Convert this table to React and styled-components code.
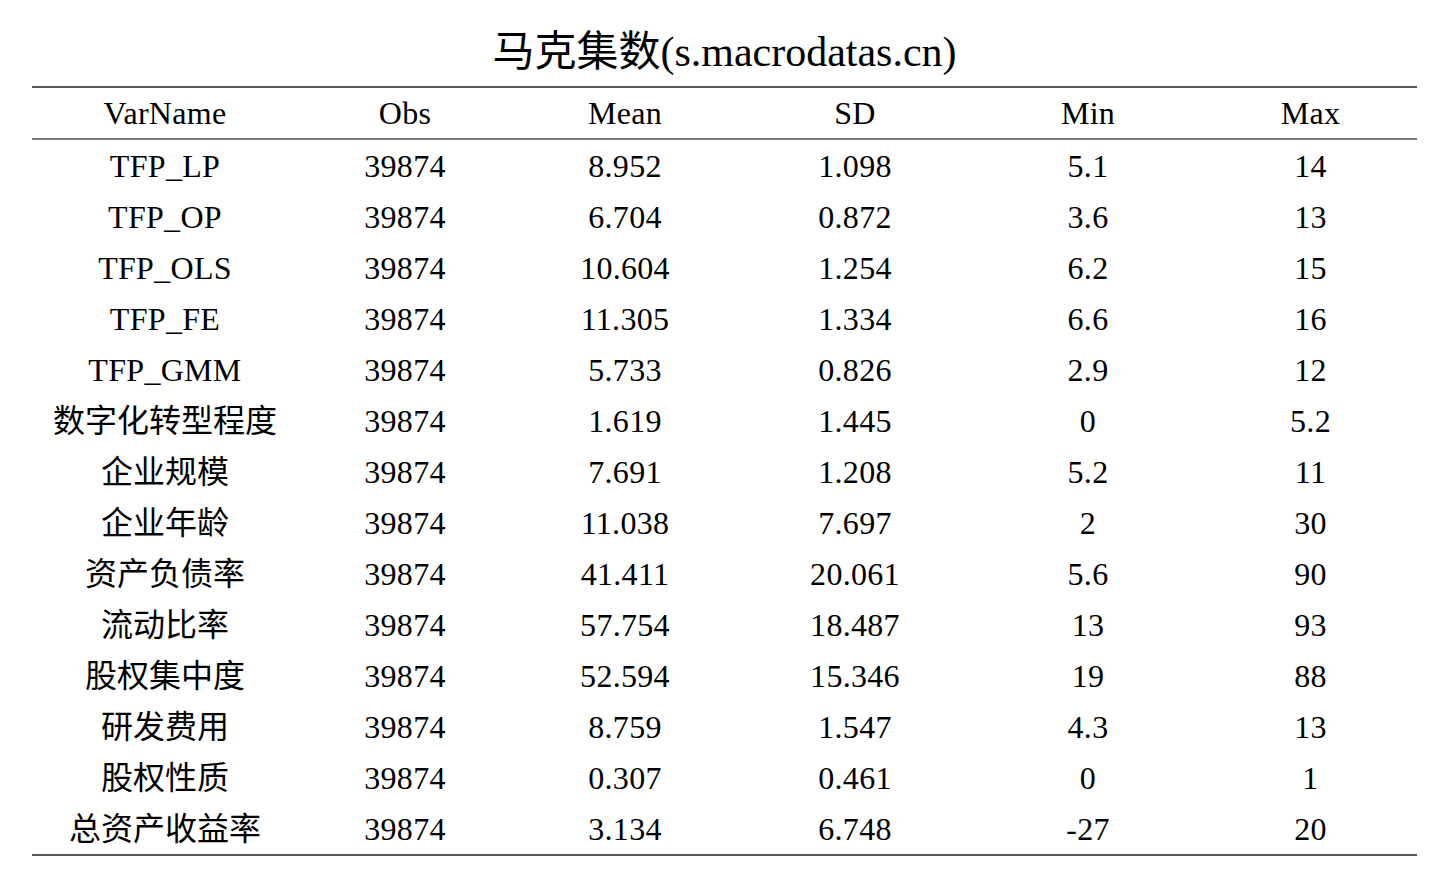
import React from "react";
import styled, { createGlobalStyle } from "styled-components";

const GlobalStyle = createGlobalStyle`
  html, body {
    margin: 0;
    padding: 0;
    background: #fff;
  }
  body {
    font-family: "Liberation Serif", "Times New Roman", "Noto Sans CJK SC", serif;
    color: #000;
  }
`;

const Page = styled.div`
  width: 1440px;
  height: 882px;
  padding: 0 23px 0 32px;
  box-sizing: border-box;
`;

const Title = styled.h1`
  margin: 0;
  height: 86px;
  display: flex;
  align-items: center;
  justify-content: center;
  padding-top: 8px;
  box-sizing: border-box;
  font-size: 42px;
  font-weight: normal;
  letter-spacing: 0;
`;

const Table = styled.div`
  width: 1385px;
  border-top: 2px solid #5a5a5a;
  border-bottom: 2px solid #5a5a5a;
`;

const Row = styled.div`
  display: grid;
  grid-template-columns: 266px 214px 226px 234px 232px 213px;
  height: ${(p) => (p.$head ? "50px" : "51px")};
  align-items: center;
  font-size: 32px;
  line-height: 1;
  border-bottom: ${(p) => (p.$head ? "2px solid #7a7a7a" : "none")};
`;

const Cell = styled.div`
  text-align: center;
  white-space: nowrap;
  padding-top: 0;
  letter-spacing: ${(p) => (p.$cjk ? "0" : "0.3px")};
`;

const headers = ["VarName", "Obs", "Mean", "SD", "Min", "Max"];

const rows = [
  ["TFP_LP", "39874", "8.952", "1.098", "5.1", "14"],
  ["TFP_OP", "39874", "6.704", "0.872", "3.6", "13"],
  ["TFP_OLS", "39874", "10.604", "1.254", "6.2", "15"],
  ["TFP_FE", "39874", "11.305", "1.334", "6.6", "16"],
  ["TFP_GMM", "39874", "5.733", "0.826", "2.9", "12"],
  ["数字化转型程度", "39874", "1.619", "1.445", "0", "5.2"],
  ["企业规模", "39874", "7.691", "1.208", "5.2", "11"],
  ["企业年龄", "39874", "11.038", "7.697", "2", "30"],
  ["资产负债率", "39874", "41.411", "20.061", "5.6", "90"],
  ["流动比率", "39874", "57.754", "18.487", "13", "93"],
  ["股权集中度", "39874", "52.594", "15.346", "19", "88"],
  ["研发费用", "39874", "8.759", "1.547", "4.3", "13"],
  ["股权性质", "39874", "0.307", "0.461", "0", "1"],
  ["总资产收益率", "39874", "3.134", "6.748", "-27", "20"],
];

const isCjk = (s) => /[\u4e00-\u9fff]/.test(s);

export default function App() {
  return (
    <Page>
      <GlobalStyle />
      <Title>马克集数(s.macrodatas.cn)</Title>
      <Table>
        <Row $head>
          {headers.map((h) => (
            <Cell key={h} $head>
              {h}
            </Cell>
          ))}
        </Row>
        {rows.map((r) => (
          <Row key={r[0]}>
            {r.map((v, i) => (
              <Cell key={i} $cjk={isCjk(v)}>
                {v}
              </Cell>
            ))}
          </Row>
        ))}
      </Table>
    </Page>
  );
}
